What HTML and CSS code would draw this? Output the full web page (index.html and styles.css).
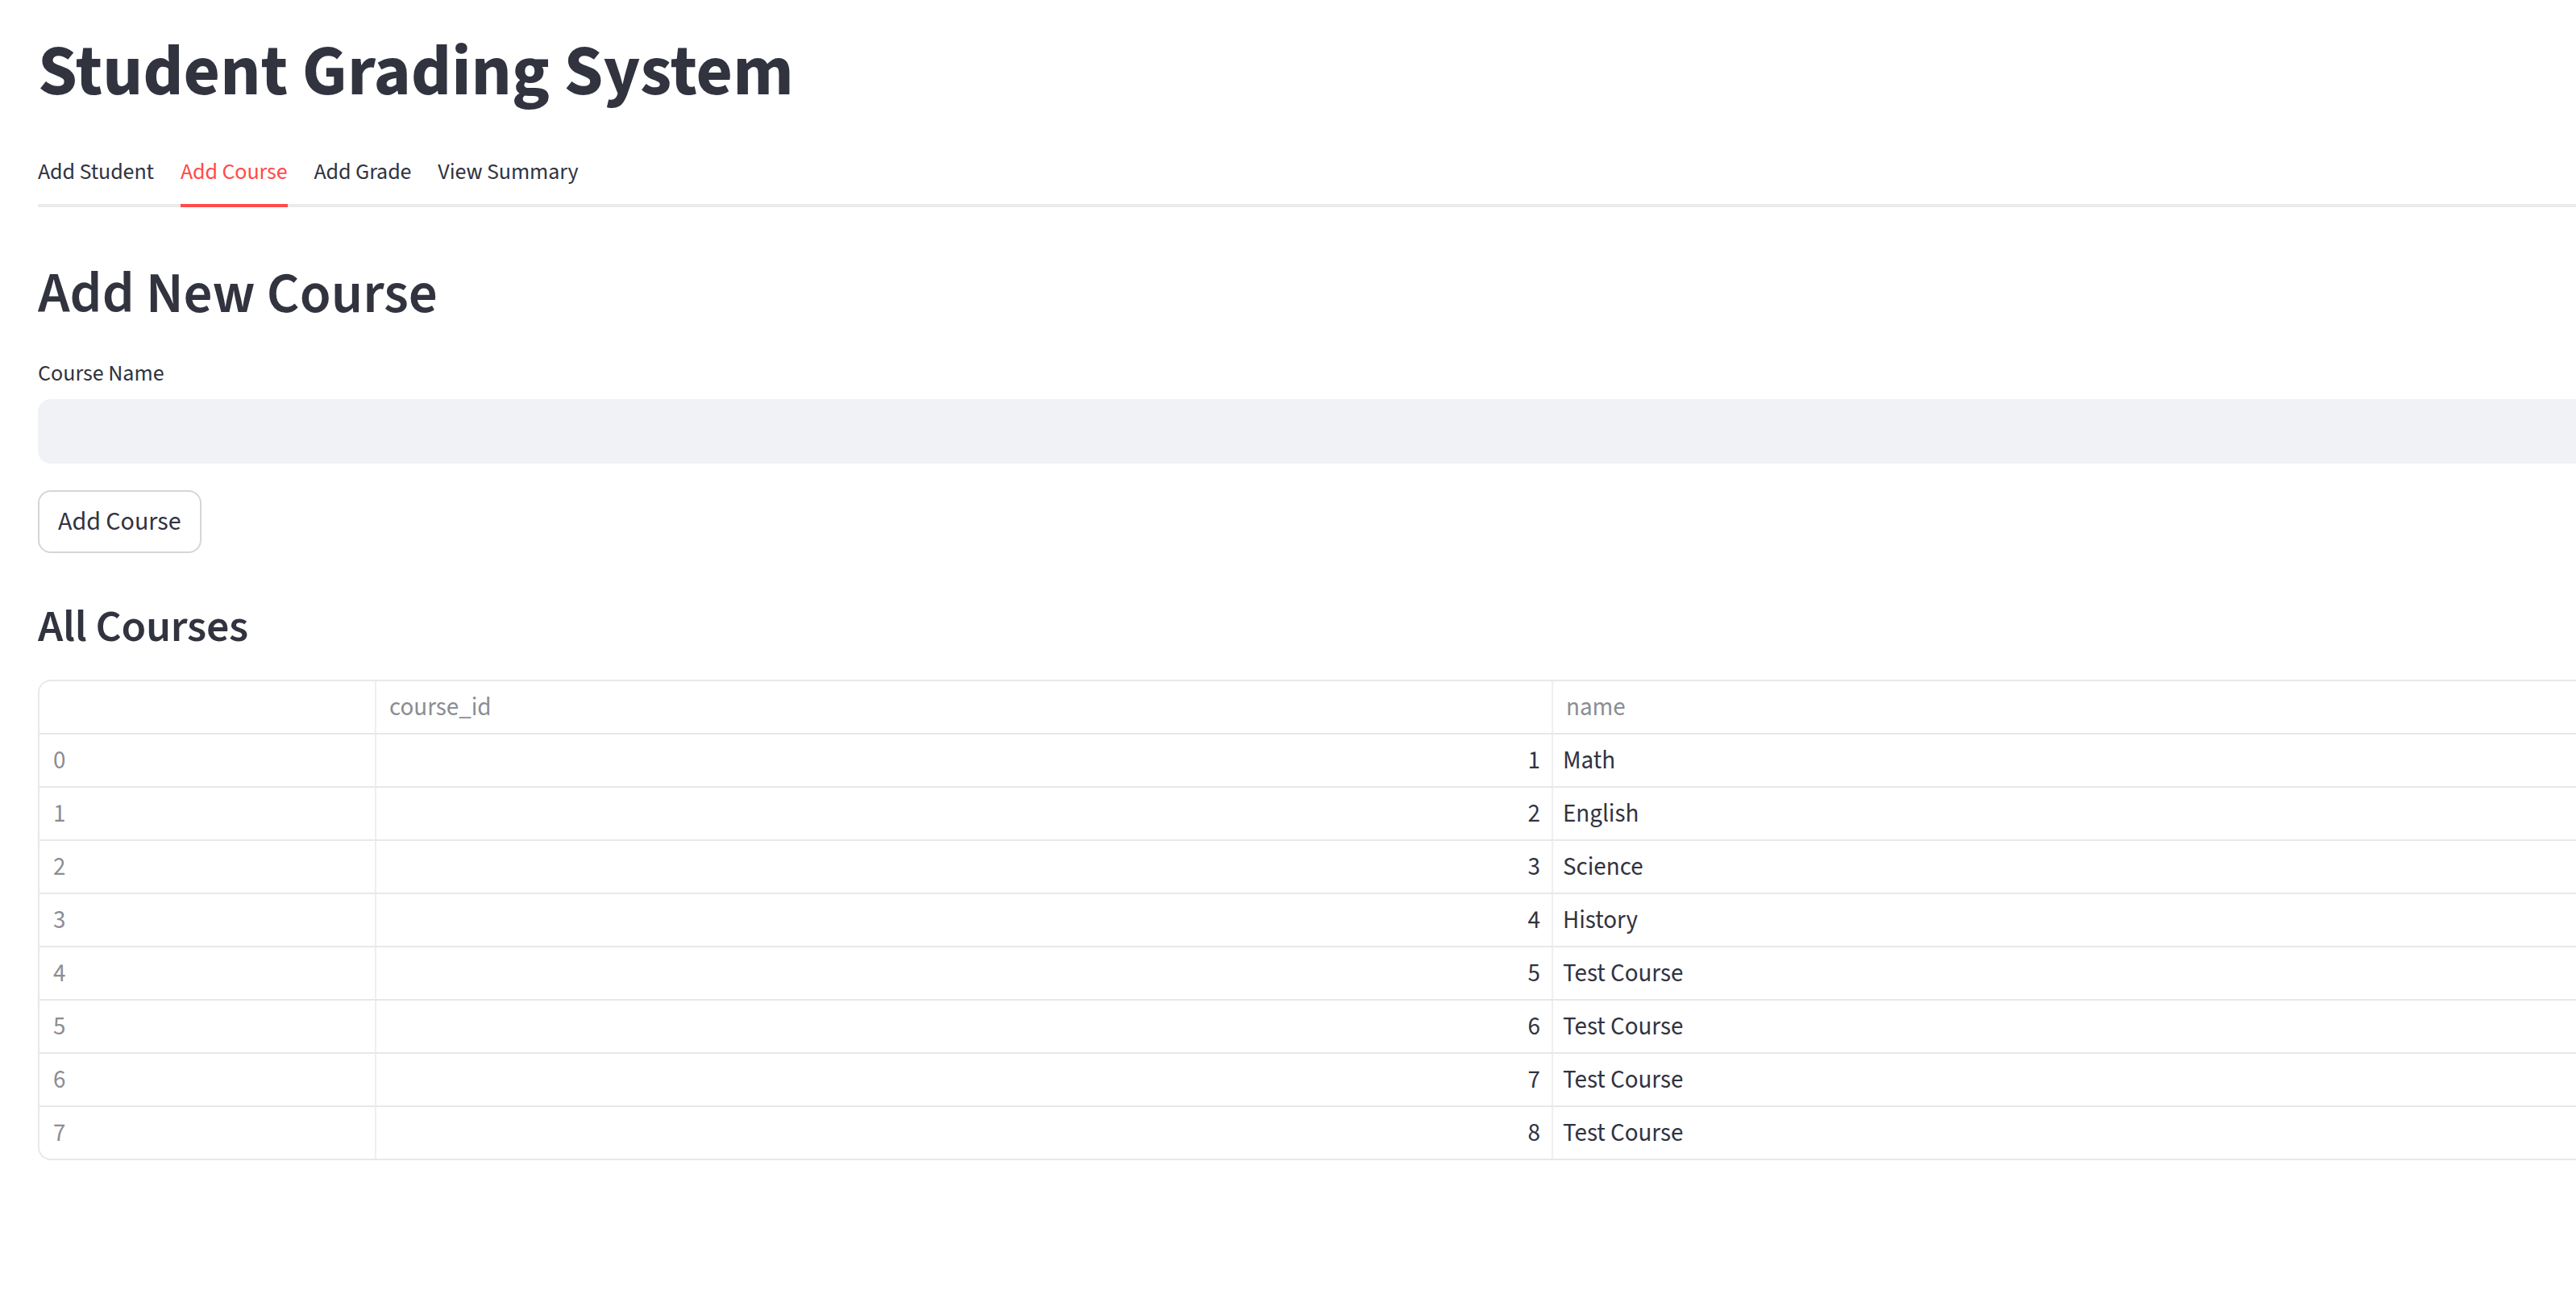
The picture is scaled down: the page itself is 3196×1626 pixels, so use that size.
FILE: index.html
```html
<!DOCTYPE html>
<html lang="en">
<head>
<meta charset="utf-8">
<title>Student Grading System</title>
<link rel="stylesheet" href="styles.css">
</head>
<body>
<main class="main">
  <h1 class="title">Student Grading System</h1>
  <div class="tabs">
    <div class="tab">Add Student</div>
    <div class="tab active">Add Course</div>
    <div class="tab">Add Grade</div>
    <div class="tab">View Summary</div>
  </div>
  <h2 class="h2">Add New Course</h2>
  <label class="label">Course Name</label>
  <div class="input"></div>
  <button class="btn">Add Course</button>
  <h3 class="h3">All Courses</h3>
  <div class="table">
    <div class="row head"><div class="cell idx"></div><div class="cell hd">course_id</div><div class="cell hd">name</div></div>
    <div class="row"><div class="cell idx">0</div><div class="cell num">1</div><div class="cell txt">Math</div></div>
    <div class="row"><div class="cell idx">1</div><div class="cell num">2</div><div class="cell txt">English</div></div>
    <div class="row"><div class="cell idx">2</div><div class="cell num">3</div><div class="cell txt">Science</div></div>
    <div class="row"><div class="cell idx">3</div><div class="cell num">4</div><div class="cell txt">History</div></div>
    <div class="row"><div class="cell idx">4</div><div class="cell num">5</div><div class="cell txt">Test Course</div></div>
    <div class="row"><div class="cell idx">5</div><div class="cell num">6</div><div class="cell txt">Test Course</div></div>
    <div class="row"><div class="cell idx">6</div><div class="cell num">7</div><div class="cell txt">Test Course</div></div>
    <div class="row"><div class="cell idx">7</div><div class="cell num">8</div><div class="cell txt">Test Course</div></div>
  </div>
</main>
</body>
</html>
```
FILE: styles.css
```css
html, body {
  margin: 0;
  padding: 0;
  background: #ffffff;
}
body {
  font-family: "Source Sans 3", "Source Sans Pro", Lato, sans-serif;
  color: #31333f;
}
.main {
  box-sizing: border-box;
  width: 100%;
  padding-left: 47px;
  display: flex;
  flex-direction: column;
  align-items: flex-start;
}
.title {
  margin: 37px 0 0;
  font-size: 88px;
  font-weight: 700;
  line-height: 1.2;
}
.tabs {
  margin-top: 48px;
  align-self: stretch;
  display: flex;
  gap: 33px;
  border-bottom: 4px solid #ebebed;
}
.tab {
  font-size: 28px;
  line-height: 45px;
  letter-spacing: -0.1px;
  padding-bottom: 17px;
  margin-bottom: -4px;
  border-bottom: 4px solid transparent;
  white-space: nowrap;
}
.tab.active {
  color: #ff4b4b;
  border-bottom-color: #ff4b4b;
}
.h2 {
  margin: 65px 0 0;
  font-size: 71px;
  font-weight: 600;
  line-height: 1.2;
}
.label {
  margin-top: 34px;
  font-size: 28px;
  line-height: 45px;
}
.input {
  margin-top: 9px;
  align-self: stretch;
  height: 80px;
  background: #f0f2f6;
  border-radius: 16px 0 0 16px;
}
.btn {
  margin-top: 33px;
  height: 78px;
  padding: 0 23px;
  font-family: inherit;
  font-size: 32px;
  color: #31333f;
  background: #ffffff;
  border: 2px solid #d6d6d9;
  border-radius: 16px;
}
.h3 {
  margin: 58px 0 0;
  font-size: 56px;
  font-weight: 600;
  line-height: 1.2;
  letter-spacing: -0.3px;
}
.table {
  margin-top: 32px;
  align-self: stretch;
  border: 2px solid #e8e8ea;
  border-right: 0;
  border-radius: 16px 0 0 16px;
  overflow: hidden;
}
.row {
  display: grid;
  grid-template-columns: 416px 1460px 1fr;
  height: 64px;
  border-top: 2px solid #e8e8ea;
}
.row.head {
  border-top: 0;
}
.cell {
  display: flex;
  align-items: center;
  padding: 0 16px;
  font-size: 31px;
  white-space: nowrap;
  border-left: 2px solid #efeff1;
}
.cell.idx {
  border-left: 0;
  color: #8b8d94;
  padding-left: 17px;
}
.cell.hd {
  color: #8b8d94;
}
.cell.num {
  justify-content: flex-end;
  padding-right: 14px;
}
.cell.txt {
  padding-left: 12px;
}
```
